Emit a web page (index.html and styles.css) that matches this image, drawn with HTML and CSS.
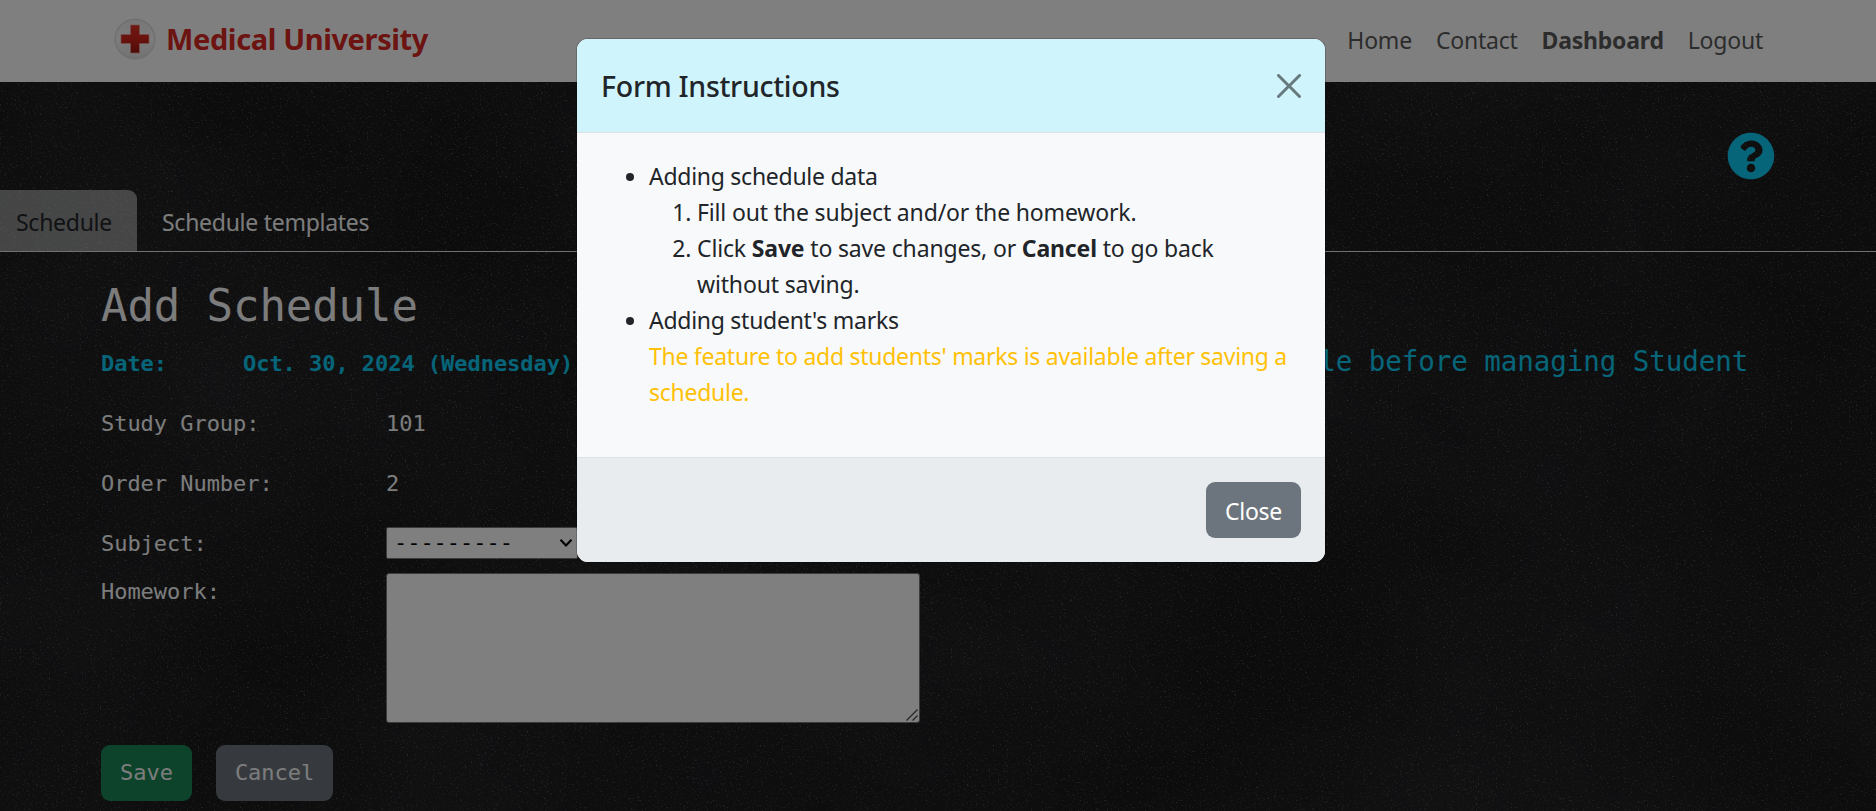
FILE: index.html
```html
<!DOCTYPE html>
<html lang="en">
<head>
<meta charset="utf-8">
<title>Medical University - Add Schedule</title>
<link rel="stylesheet" href="styles.css">
</head>
<body>
<svg class="board" aria-hidden="true">
  <filter id="dust" x="0" y="0" width="100%" height="100%">
    <feTurbulence type="fractalNoise" baseFrequency="0.55" numOctaves="3" seed="8"/>
    <feColorMatrix values="0 0 0 0 .75  0 0 0 0 .75  0 0 0 0 .78  2.2 1.6 0 0 -2.15"/>
  </filter>
  <filter id="smear" x="0" y="0" width="100%" height="100%">
    <feTurbulence type="fractalNoise" baseFrequency="0.003 0.004" numOctaves="3" seed="3"/>
    <feColorMatrix values="0 0 0 0 .6  0 0 0 0 .6  0 0 0 0 .65  .1 0 0 0 -.03"/>
  </filter>
  <rect width="100%" height="100%" filter="url(#smear)"/>
  <rect width="100%" height="100%" filter="url(#dust)" opacity=".3"/>
</svg>

<header class="navbar">
  <a class="brand">
    <svg class="brand-logo" viewBox="0 0 42 42">
      <defs>
        <linearGradient id="disc" x1="0" y1="0" x2="0" y2="1"><stop offset="0" stop-color="#eeeeee"/><stop offset=".5" stop-color="#fafafa"/><stop offset="1" stop-color="#e4e4e4"/></linearGradient>
        <linearGradient id="cross" x1="0" y1="0" x2="0" y2="1"><stop offset="0" stop-color="#e0352a"/><stop offset=".5" stop-color="#d4241b"/><stop offset="1" stop-color="#981610"/></linearGradient>
      </defs>
      <circle cx="21" cy="21" r="19.800" fill="url(#disc)" stroke="#dedede" stroke-width="1.400"/>
      <path d="M16.500 7h9v9.500H35v9h-9.500V35h-9v-9.500H7v-9h9.500z" fill="url(#cross)" stroke="#e8a09a" stroke-width=".7"/>
    </svg>
    <span class="brand-name">Medical University</span>
  </a>
  <nav class="nav-links">
    <a>Home</a><a>Contact</a><a class="current">Dashboard</a><a>Logout</a>
  </nav>
</header>

<div class="help-row">
  <svg class="help" viewBox="0 0 512 512"><path fill="currentColor" d="M504 256c0 136.997-111.043 248-248 248S8 392.997 8 256C8 119.083 119.043 8 256 8s248 111.083 248 248zM262.655 90c-54.497 0-89.255 22.957-116.549 63.758-3.536 5.286-2.353 12.415 2.715 16.258l34.699 26.310c5.205 3.947 12.621 3.008 16.665-2.122 17.864-22.658 30.113-35.797 57.303-35.797 20.429 0 45.698 13.148 45.698 32.958 0 14.976-12.363 22.667-32.534 33.976C247.128 238.528 216 254.941 216 296v4c0 6.627 5.373 12 12 12h56c6.627 0 12-5.373 12-12v-1.333c0-28.462 83.186-29.647 83.186-106.667 0-58.002-60.165-102-116.531-102zM256 338c-25.365 0-46 20.635-46 46 0 25.364 20.635 46 46 46s46-20.636 46-46c0-25.365-20.635-46-46-46z"/></svg>
</div>

<ul class="tabs">
  <li class="tab active">Schedule</li>
  <li class="tab">Schedule templates</li>
</ul>

<main class="content">
  <section class="form">
    <h2>Add Schedule</h2>
    <div class="date-row"><span>Date:</span><span>Oct. 30, 2024 (Wednesday)</span></div>
    <div class="row"><label>Study Group:</label><span>101</span></div>
    <div class="row"><label>Order Number:</label><span>2</span></div>
    <div class="row"><label>Subject:</label>
      <div class="select"><span>---------</span>
        <svg class="chevron" viewBox="0 0 14 10"><path d="M1.500 1.800L7 7.500l5.500-5.700" fill="none" stroke="#000" stroke-width="2.200"/></svg>
      </div>
    </div>
    <div class="row homework"><label>Homework:</label>
      <div class="textarea"><svg class="grip" viewBox="0 0 12 12"><path d="M.5 11.500l11-11M6.500 11.500l5-5" stroke="#505050" stroke-width="1.400"/></svg></div>
    </div>
    <div class="actions"><button class="btn save">Save</button><button class="btn cancel">Cancel</button></div>
  </section>
  <aside class="note">Please save the schedule before managing Student</aside>
</main>

<div class="backdrop">
  <div class="modal">
    <div class="modal-header">
      <h5>Form Instructions</h5>
      <svg class="close-x" viewBox="0 0 16 16"><path d="M.293.293a1 1 0 0 1 1.414 0L8 6.586 14.293.293a1 1 0 1 1 1.414 1.414L9.414 8l6.293 6.293a1 1 0 0 1-1.414 1.414L8 9.414l-6.293 6.293a1 1 0 0 1-1.414-1.414L6.586 8 .293 1.707a1 1 0 0 1 0-1.414z"/></svg>
    </div>
    <div class="modal-body">
      <ul>
        <li>Adding schedule data
          <ol>
            <li>Fill out the subject and/or the homework.</li>
            <li>Click <b>Save</b> to save changes, or <b>Cancel</b> to go back<br>without saving.</li>
          </ol>
        </li>
        <li>Adding student's marks<br><span class="warning">The feature to add students' marks is available after saving a<br>schedule.</span></li>
      </ul>
    </div>
    <div class="modal-footer"><button class="btn close">Close</button></div>
  </div>
</div>
</body>
</html>
```
FILE: styles.css
```css
* { box-sizing: border-box; }
body {
  margin: 0;
  height: 811px;
  overflow: hidden;
  background: #19191b;
  color: #f8f9fa;
  font: 23px/36px "Noto Sans", "Open Sans", sans-serif;
  letter-spacing: -0.27px;
}
h2, h5, ul, ol { margin: 0; padding: 0; font-weight: 400; }

.board { position: absolute; inset: 0; width: 100%; height: 811px; z-index: -1; }

.navbar {
  display: flex;
  justify-content: space-between;
  align-items: center;
  height: 82px;
  padding: 0 113px 0 114px;
  background: #fff;
}
.brand { display: flex; align-items: center; gap: 10px; margin-top: -4px; }
.brand-logo { width: 42px; height: 42px; }
.brand-name { font-size: 29px; font-weight: 700; color: #d92823; letter-spacing: -0.38px; }
.nav-links { display: flex; gap: 24px; margin-top: -2px; color: #595959; letter-spacing: -0.22px; }
.current { font-weight: 700; }

.help-row { display: flex; justify-content: flex-end; height: 108px; padding: 50px 101px 0 0; }
.help { width: 48px; height: 48px; color: #0dcaf0; }

.tabs { display: flex; height: 62px; list-style: none; border-bottom: 1px solid #dee2e6; }
.tab { padding: 14px 25px 0; }
.tab.active { width: 137px; padding-left: 16px; background: rgba(248, 249, 250, .5); color: #212529; border-radius: 0 9px 0 0; }

.content { display: flex; padding: 0 83px; font-family: "DejaVu Sans Mono", monospace; font-size: 22px; letter-spacing: -.04px; }
.form { width: 855px; padding: 25px 18px 0; }
h2 { font-size: 44px; line-height: 58px; letter-spacing: -.09px; }
.date-row { display: flex; margin-top: 11px; height: 36px; font-weight: 700; color: #0dcaf0; }
.date-row span:first-child { width: 142px; }
.row { display: flex; margin-top: 24px; min-height: 36px; }
.row label { width: 285px; }
.select {
  display: flex;
  align-items: center;
  justify-content: space-between;
  width: 192px;
  height: 32px;
  margin-top: 1px;
  padding: 0 4px 0 7px;
  background: #fff;
  color: #000;
  border: 1px solid #767676;
  border-radius: 2px;
}
.chevron { width: 14px; height: 10px; }
.homework { margin-top: 12px; height: 148px; }
.textarea {
  display: flex;
  align-items: flex-end;
  justify-content: flex-end;
  width: 534px;
  height: 150px;
  margin-top: -1px;
  padding: 1px;
  background: #fff;
  border: 1px solid #767676;
  border-radius: 3px;
}
.grip { width: 12px; height: 12px; }
.actions { display: flex; gap: 24px; margin-top: 23px; }
.btn { border: 0; border-radius: 9px; height: 56px; padding: 0; font: inherit; letter-spacing: inherit; color: #fff; }
.save { width: 91px; background: #198754; color: #f8f9fa; }
.cancel { width: 117px; background: #6c757d; color: #f8f9fa; }
.note { width: 855px; padding: 91px 18px 0; font-size: 27.5px; letter-spacing: -.05px; color: #0dcaf0; }

.backdrop { position: absolute; inset: 0; height: 811px; background: rgba(0, 0, 0, .5); }
.modal { width: 748px; margin: 39px 0 0 577px; color: #212529; border-radius: 11px; overflow: hidden; background: #f8f9fa; box-shadow: 0 0 0 1px rgba(0, 0, 0, .18); }
.modal-header { display: flex; justify-content: space-between; align-items: center; height: 94px; padding: 0 24px; background: #cff4fc; border-bottom: 1px solid #dee2e6; }
h5 { font-size: 28.5px; font-weight: 500; letter-spacing: -0.28px; }
.close-x { width: 24px; height: 24px; opacity: .5; }
.modal-body { height: 324px; padding: 25px 24px 0 24px; }
.modal-body ul, .modal-body ol { padding-left: 48px; }
.modal-body ol { letter-spacing: -.16px; }
.warning { color: #ffc107; }
.modal-footer { display: flex; justify-content: flex-end; height: 105px; padding: 24px; background: #e9ecef; border-top: 1px solid #dee2e6; }
.close { width: 95px; padding-top: 1px; background: #6c757d; }
```
